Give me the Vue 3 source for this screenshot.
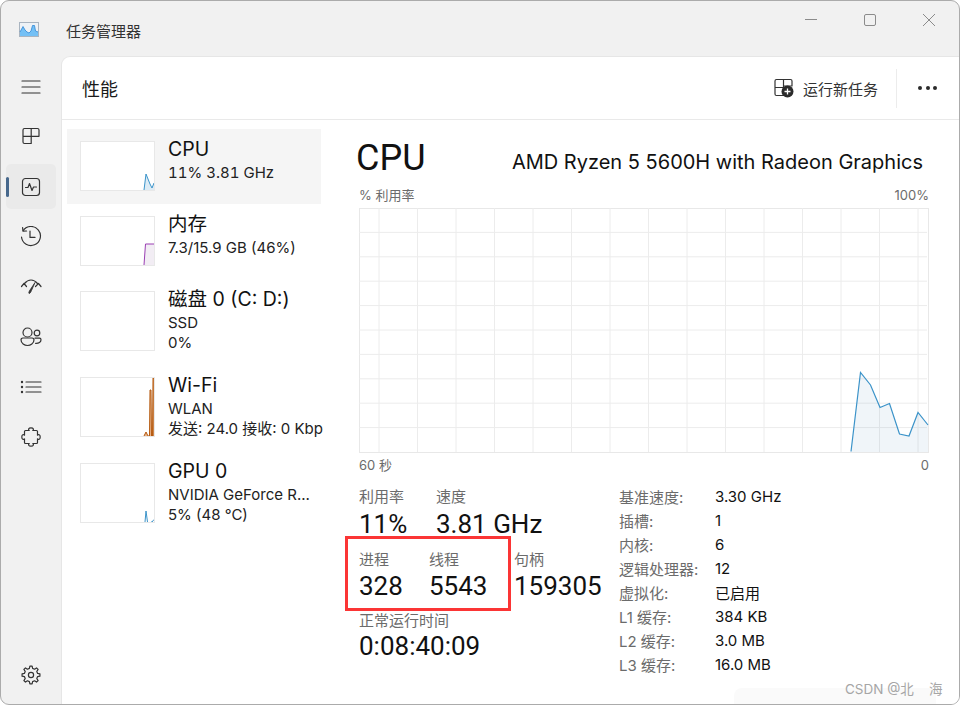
<script setup>
const gridV = Array.from({ length: 15 }, (_, i) => 20 + i * 38.5)
const gridH = Array.from({ length: 9 }, (_, i) => 24.4 * (i + 1))
const cpuPts = [[492, 243.5], [501.5, 164.5], [511.5, 177], [521, 199.5], [530.5, 195.5], [540.5, 226], [550, 228], [559, 204.5], [569, 217]]
const cpuLine = cpuPts.map(p => p.join(',')).join(' ')
const cpuArea = cpuLine + ' 569,244 492,244'

const items = [
  { name: 'CPU', lines: ['11% 3.81 GHz'], active: true, h: 48, color: '#3b93c9', fill: '#dcebf5', pts: '63,48 65,32 69,42 71,46 73,41', area: '63,48 65,32 69,42 71,46 73,41 73,48' },
  { name: '内存', lines: ['7.3/15.9 GB (46%)'], h: 48, color: '#9a3fb3', fill: '#f2edf4', pts: '63,48 64.5,27 73,27', area: '63,48 64.5,27 73,27 73,48' },
  { name: '磁盘 0 (C: D:)', lines: ['SSD', '0%'], tall: true, h: 58, color: '#6aa84f', fill: '#fff', pts: '', area: '' },
  { name: 'Wi-Fi', lines: ['WLAN', '发送: 24.0 接收: 0 Kbp'], tall: true, h: 58, color: '#b55a10', fill: '#e7b48c', pts: '63,58 65,54 67,58 68.5,58 69,12 70,12 70.5,58 71.5,58 72,0 73,0 73,58', area: '63,58 65,54 67,58 68.5,58 69,12 70,12 70.5,58 71.5,58 72,0 73,0 73,58' },
  { name: 'GPU 0', lines: ['NVIDIA GeForce R...', '5% (48 °C)'], tall: true, h: 58, color: '#3b93c9', fill: '#dcebf5', pts: '64,58 65,47 66.5,58', area: '', extra: '70,58 71,58 73,55.5' }
]

const specs = [
  ['基准速度:', '3.30 GHz'], ['插槽:', '1'], ['内核:', '6'], ['逻辑处理器:', '12'],
  ['虚拟化:', '已启用'], ['L1 缓存:', '384 KB'], ['L2 缓存:', '3.0 MB'], ['L3 缓存:', '16.0 MB']
]

function gear(cx, cy, ro, ri, n) {
  const out = []
  const step = (Math.PI * 2) / n
  for (let i = 0; i < n; i++) {
    const a = i * step - Math.PI / 2
    const pts = [[a - step * 0.3, ri], [a - step * 0.16, ro], [a + step * 0.16, ro], [a + step * 0.3, ri]]
    for (const [t, r] of pts) out.push((cx + r * Math.cos(t)).toFixed(2) + ' ' + (cy + r * Math.sin(t)).toFixed(2))
  }
  return 'M' + out.join('L') + 'Z'
}
const gearPath = gear(10, 10, 9, 6.8, 8)
</script>

<template>
  <div class="window">
    <header class="titlebar">
      <svg class="app-icon" width="20" height="15" viewBox="0 0 20 15">
        <rect x="0.5" y="0.5" width="19" height="14" fill="#eef2f6" stroke="#a9b4c0" />
        <path d="M1 13V10L4 4.5L6 8L8 10L10 11L12 9L13.5 3.5L15.5 3.5L16.5 9L19 10V14H1Z" fill="#74c0f5" />
        <path d="M1 10L4 4.5L6 8L8 10L10 11L12 9L13.5 3.5L15.5 3.5L16.5 9L19 10" fill="none" stroke="#2d86d6" stroke-width="0.8" />
      </svg>
      <span class="app-title">任务管理器</span>
      <div class="win-controls">
        <svg class="ctl-min" width="14" height="14" viewBox="0 0 14 14"><path d="M1 6.5H13" stroke="#8b8b8b" /></svg>
        <svg class="ctl-max" width="14" height="14" viewBox="0 0 14 14"><rect x="1.5" y="1.5" width="11" height="11" rx="1.5" fill="none" stroke="#8b8b8b" /></svg>
        <svg class="ctl-close" width="14" height="14" viewBox="0 0 14 14"><path d="M1 1L13 13M13 1L1 13" stroke="#8b8b8b" /></svg>
      </div>
    </header>
    <div class="body">
      <nav class="sidebar">
        <div class="nav-item">
          <svg width="20" height="20" viewBox="0 0 20 20"><path d="M1 4H19M1 10H19M1 16H19" class="ic" /></svg>
        </div>
        <div class="nav-item">
          <svg width="20" height="20" viewBox="0 0 20 20"><path d="M3.5 1.5H16.500A1.5 1.5 0 0 1 18 3V9.300H10.200V16.500H3.500A1.500 1.500 0 0 1 2 15V3A1.500 1.500 0 0 1 3.500 1.500ZM2 9.300H10.200M10.200 1.500V9.300" class="ic" /></svg>
        </div>
        <div class="nav-item active">
          <span class="indicator"></span>
          <svg width="20" height="20" viewBox="0 0 20 20"><rect x="1.5" y="1.5" width="17" height="17" rx="3" class="ic" /><path d="M4.5 10.5H7L8.5 6.5L11 13.5L12.5 10H15.5" class="ic" /></svg>
        </div>
        <div class="nav-item">
          <svg width="22" height="22" viewBox="0 0 22 22"><path d="M3.2 4.5A9.5 9.5 0 1 1 1.5 11" class="ic" /><path d="M2.6 1.6L3 5.2L6.6 5" class="ic" /><path d="M10 5V11.4H15" class="ic" /></svg>
        </div>
        <div class="nav-item">
          <svg width="22" height="18" viewBox="0 0 22 18"><path d="M1.500 8.500L4 5.500L6.500 8.500M15.500 8.500L18.500 5.500L21 8.500M4.500 5.500C7 2.500 10 2 11 2C12.500 2 15 2.500 17.500 5.500" class="ic" /><path d="M15 4.500L11.500 12.500C10.500 15 9.500 15.800 9 15.400C8.500 15 9 13.500 10 12Z" class="needle" /></svg>
        </div>
        <div class="nav-item">
          <svg width="22" height="20" viewBox="0 0 22 20"><circle cx="7.5" cy="5.5" r="4.5" class="ic" /><circle cx="17" cy="6" r="2.8" class="ic" /><path d="M3 11H12A1.8 1.8 0 0 1 14 12.8C14 16.5 10.5 18.5 7.5 18.5C4.5 18.5 1 16.5 1 12.8A1.8 1.8 0 0 1 3 11Z" class="ic" /><path d="M15 11.2H19.5A1.5 1.5 0 0 1 21 12.7C21 15.2 18.7 16.6 15.6 16.4" class="ic" /></svg>
        </div>
        <div class="nav-item">
          <svg width="22" height="16" viewBox="0 0 22 16"><path d="M6 3H21M6 8H21M6 13H21" class="ic" /><circle cx="2" cy="3" r="1.2" fill="#333" /><circle cx="2" cy="8" r="1.2" fill="#333" /><circle cx="2" cy="13" r="1.2" fill="#333" /></svg>
        </div>
        <div class="nav-item">
          <svg width="20" height="20" viewBox="0 0 20 20"><path d="M8.200 3.500C7 2.500 7.500 0.800 10 0.800C12.500 0.800 13 2.500 11.800 3.500H15.500A1 1 0 0 1 16.500 4.500V8.200C17.500 7 19.200 7.500 19.200 10C19.200 12.500 17.500 13 16.500 11.800V15.500A1 1 0 0 1 15.500 16.500H11.800C13 17.500 12.500 19.200 10 19.200C7.500 19.200 7 17.500 8.200 16.500H4.500A1 1 0 0 1 3.500 15.500V11.800C2.500 13 0.800 12.500 0.800 10C0.800 7.500 2.500 7 3.500 8.200V4.500A1 1 0 0 1 4.500 3.500Z" class="ic" /></svg>
        </div>
        <div class="nav-spacer"></div>
        <div class="nav-item gear">
          <svg width="20" height="20" viewBox="0 0 20 20"><path :d="gearPath" class="ic" /><circle cx="10" cy="10" r="2.6" class="ic" /></svg>
        </div>
      </nav>

      <main class="panel">
        <div class="panel-head">
          <h1 class="panel-title">性能</h1>
          <div class="run-task">
            <svg width="20" height="20" viewBox="0 0 20 20">
              <path d="M2.500 1.500H16.500A1.500 1.500 0 0 1 18 3V8H9.500V17.500H2.500A1.500 1.500 0 0 1 1 16V3A1.500 1.500 0 0 1 2.500 1.500ZM1 9.500H9.500M9.500 1.500V9.500" class="ic" />
              <circle cx="13.500" cy="13.500" r="6" fill="#2b2b2b" />
              <path d="M13.500 10.500V16.500M10.500 13.500H16.500" stroke="#fff" stroke-width="1.300" />
            </svg>
            <span>运行新任务</span>
          </div>
          <span class="head-sep"></span>
          <div class="more"><i></i><i></i><i></i></div>
        </div>

        <div class="perf">
          <aside class="list">
            <div v-for="it in items" :key="it.name" class="item" :class="{ on: it.active, tall: it.tall }">
              <div class="thumb">
                <svg width="73" :height="it.h" :viewBox="`0 0 73 ${it.h}`">
                  <polygon v-if="it.area" :points="it.area" :fill="it.fill" />
                  <polyline v-if="it.pts" :points="it.pts" fill="none" :stroke="it.color" stroke-width="1" />
                  <polyline v-if="it.extra" :points="it.extra" fill="none" :stroke="it.color" stroke-width="1" />
                </svg>
              </div>
              <div class="item-text">
                <div class="item-name">{{ it.name }}</div>
                <div v-for="l in it.lines" :key="l" class="item-sub">{{ l }}</div>
              </div>
            </div>
          </aside>

          <section class="detail">
            <div class="detail-head">
              <span class="big">CPU</span>
              <span class="model">AMD Ryzen 5 5600H with Radeon Graphics</span>
            </div>
            <div class="axis top"><span>% 利用率</span><span>100%</span></div>
            <svg class="chart" width="570" height="245" viewBox="0 0 570 245">
              <rect x="0.5" y="0.500" width="569" height="244" fill="#fff" stroke="#e8e8e8" />
              <line v-for="y in gridH" :key="'h' + y" x1="0" x2="568" :y1="y" :y2="y" stroke="#ececec" />
              <line v-for="x in gridV" :key="'v' + x" :x1="x" :x2="x" y1="0" y2="244" stroke="#ececec" />
              <polygon :points="cpuArea" fill="#3b82b8" fill-opacity="0.08" />
              <polyline :points="cpuLine" fill="none" stroke="#3b93c9" stroke-width="1.200" />
            </svg>
            <div class="axis bottom"><span>60 秒</span><span>0</span></div>

            <div class="stats">
              <div class="stat-groups">
                <div class="stat-row r1">
                  <div><div class="lab">利用率</div><div class="val">11%</div></div>
                  <div><div class="lab">速度</div><div class="val">3.81 GHz</div></div>
                </div>
                <div class="stat-row r2">
                  <div><div class="lab">进程</div><div class="val">328</div></div>
                  <div><div class="lab">线程</div><div class="val">5543</div></div>
                  <div><div class="lab">句柄</div><div class="val">159305</div></div>
                </div>
                <div class="stat-row r3">
                  <div><div class="lab">正常运行时间</div><div class="val">0:08:40:09</div></div>
                </div>
              </div>
              <dl class="specs">
                <template v-for="s in specs" :key="s[0]">
                  <dt>{{ s[0] }}</dt>
                  <dd>{{ s[1] }}</dd>
                </template>
              </dl>
            </div>
          </section>
        </div>
      </main>
    </div>
    <div class="redbox"></div>
    <div class="wm-box"></div>
    <div class="wm-text">CSDN @北&nbsp;&nbsp;&nbsp;&nbsp;海</div>
  </div>
</template>

<style>
html, body { margin: 0; background: #fff; }
</style>

<style scoped>
.window {
  position: relative;
  box-sizing: border-box;
  width: 960px;
  height: 705px;
  display: flex;
  flex-direction: column;
  overflow: hidden;
  background: #f1f1f1;
  border: 1px solid #ababab;
  border-radius: 9px;
  font-family: Inter, "Noto Sans CJK SC", sans-serif;
  color: #111;
}
.titlebar {
  height: 55px;
  flex: none;
  display: flex;
  align-items: center;
}
.app-icon { margin: 1px 0 0 18px; }
.app-title {
  margin: 4px 0 0 27px;
  font-size: 15px;
  color: #333;
  font-family: "Noto Sans CJK SC", sans-serif;
}
.win-controls {
  margin: -18px 0 0 auto;
  display: flex;
  align-items: center;
}
.ctl-min { margin-right: 45px; }
.ctl-max { margin-right: 45px; }
.ctl-close { margin-right: 23px; }
.body { flex: 1; display: flex; min-height: 0; }
.sidebar {
  width: 60px;
  flex: none;
  display: flex;
  flex-direction: column;
  align-items: stretch;
}
.nav-item {
  position: relative;
  height: 50px;
  display: flex;
  align-items: center;
  justify-content: center;
}
.nav-item:first-child { margin-top: 6px; }
.nav-item.active {
  height: 45px;
  margin: 2px 5px 3px;
  background: #eaeaea;
  border-radius: 5px;
}
.indicator {
  position: absolute;
  left: 0;
  top: 13px;
  width: 3px;
  height: 20px;
  border-radius: 2px;
  background: #47688c;
}
.nav-spacer { flex: 1; }
.nav-item.gear { height: 48px; margin-bottom: 5px; }
.ic {
  fill: none;
  stroke: #333;
  stroke-width: 1.2;
  stroke-linejoin: round;
  stroke-linecap: round;
}
.needle {
  fill: #333;
  stroke: #333;
  stroke-width: 0.8;
  stroke-linejoin: round;
}
.panel {
  flex: 1;
  min-width: 0;
  background: #fff;
  border-top: 1px solid #e6e6e6;
  border-left: 1px solid #e6e6e6;
  border-top-left-radius: 9px;
  display: flex;
  flex-direction: column;
}
.panel-head {
  height: 63px;
  flex: none;
  box-sizing: border-box;
  display: flex;
  align-items: center;
  border-bottom: 1px solid #e9e9e9;
}
.panel-title {
  margin: 0 0 0 20px;
  font-size: 18px;
  font-weight: 400;
  color: #1a1a1a;
  font-family: "Noto Sans CJK SC", sans-serif;
}
.run-task {
  margin-left: auto;
  display: flex;
  align-items: center;
  gap: 9px;
  font-size: 15px;
  color: #333;
  font-family: "Noto Sans CJK SC", sans-serif;
}
.head-sep {
  width: 1px;
  height: 39px;
  margin: 0 21px 0 18px;
  background: #ececec;
}
.more {
  display: flex;
  gap: 3.5px;
  margin-right: 22px;
}
.more i {
  width: 4px;
  height: 4px;
  border-radius: 50%;
  background: #2b2b2b;
}
.perf { flex: 1; display: flex; min-height: 0; }
.list {
  width: 297px;
  flex: none;
  box-sizing: border-box;
  padding: 9px 0 0 5px;
  display: flex;
  flex-direction: column;
}
.item {
  box-sizing: border-box;
  width: 254px;
  height: 75px;
  padding: 8px 0 0 13px;
  display: flex;
  flex: none;
}
.item.tall { height: 86px; }
.item.on { background: #f5f5f5; }
.item.on .item-sub { font-variant-numeric: tabular-nums; }
.thumb {
  box-sizing: border-box;
  width: 75px;
  height: 50px;
  flex: none;
  margin-top: 4px;
  border: 1px solid #e8e8e8;
  background: #fff;
}
.item.tall .thumb { height: 60px; }
.thumb svg { display: block; }
.item-text {
  margin-left: 13px;
  white-space: pre;
}
.item-name {
  font-size: 19.5px;
  line-height: 24px;
  color: #111;
}
.item-sub {
  font-size: 15px;
  line-height: 20px;
  color: #222;
}
.item-name + .item-sub { margin-top: 2px; }
.detail {
  flex: 1;
  min-width: 0;
  padding-right: 30px;
}
.detail-head {
  height: 65px;
  display: flex;
  align-items: flex-start;
  justify-content: space-between;
}
.big {
  margin: 14px 0 0 -3px;
  font-family: Roboto, sans-serif;
  font-size: 36px;
  line-height: 48px;
  color: #111;
}
.model {
  margin: 28px 6px 0 0;
  font-size: 20px;
  line-height: 28px;
  color: #111;
}
.axis {
  display: flex;
  justify-content: space-between;
  font-size: 13px;
  line-height: 20px;
  color: #6b6b6b;
}
.chart { display: block; margin-top: 3px; }
.axis.bottom { margin-top: 2px; }
.stats {
  margin-top: 12px;
  display: flex;
}
.stat-groups { width: 260px; flex: none; }
.stat-row { display: grid; white-space: nowrap; }
.r1 { grid-template-columns: 77px auto; height: 63px; }
.r2 { grid-template-columns: 70px 85px auto; height: 61px; }
.lab {
  font-size: 15px;
  line-height: 20px;
  color: #6b6b6b;
}
.val {
  font-family: Roboto, sans-serif;
  font-size: 26px;
  line-height: 34px;
  color: #111;
}
.r2 .val { line-height: 32px; }
.r3 .val { line-height: 30px; }
.specs {
  margin: -3px 0 0;
  display: grid;
  grid-template-columns: 96px auto;
  grid-auto-rows: 24px;
  align-items: center;
  font-size: 15px;
}
.specs dt { color: #6b6b6b; }
.specs dd { margin: 0; color: #111; }
.redbox {
  position: absolute;
  left: 344px;
  top: 535px;
  width: 160px;
  height: 69px;
  border: 3px solid #fb3535;
}
.wm-box {
  position: absolute;
  left: 733px;
  top: 687px;
  width: 202px;
  height: 20px;
  background: #fafafa;
  border-radius: 8px 8px 0 0;
}
.wm-text {
  position: absolute;
  left: 844px;
  top: 679px;
  font-size: 13.5px;
  line-height: 18px;
  color: #a6a6a6;
  white-space: nowrap;
}
</style>
